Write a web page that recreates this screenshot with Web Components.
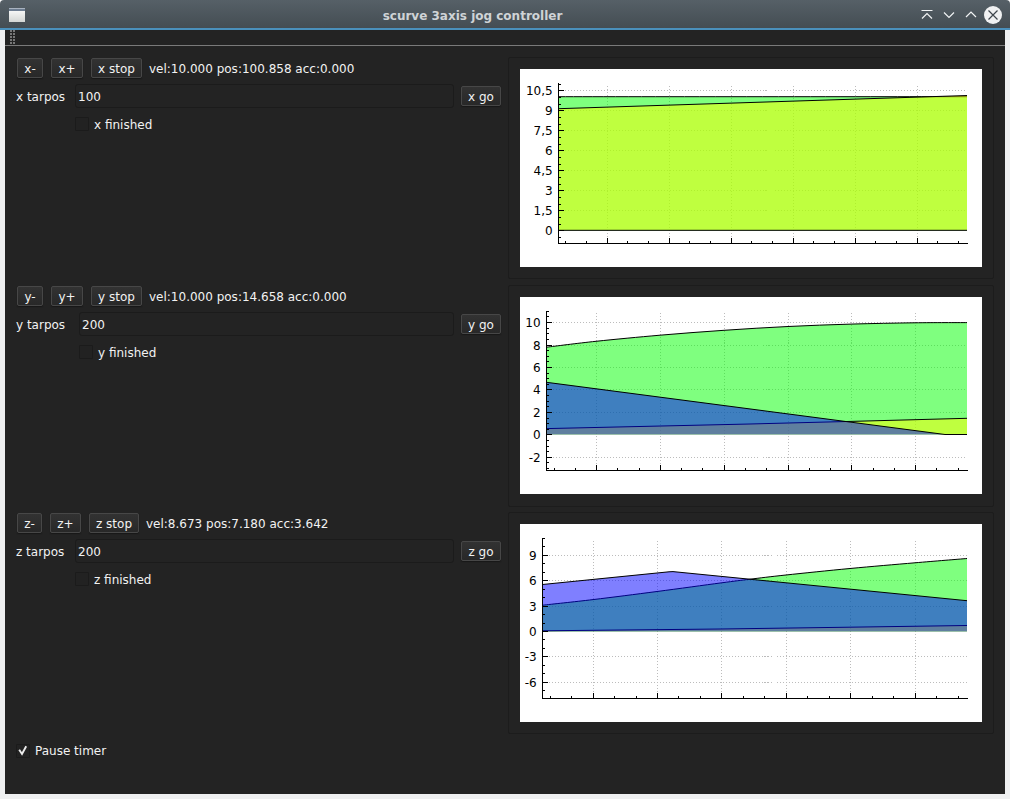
<!DOCTYPE html>
<html lang="en">
<head>
<meta charset="utf-8">
<title>scurve 3axis jog controller</title>
<style>
html,body{margin:0;height:100%;background:#fff;overflow:hidden}
body{font:12px/14px "DejaVu Sans",sans-serif;color:#f2f2f2}
</style>
</head>
<body>
<jog-window></jog-window>
<script>
const define = (name, html) => customElements.define(name, class extends HTMLElement {
  connectedCallback() {
    if (this.shadowRoot) return;
    const t = document.createElement('template');
    t.innerHTML = typeof html === 'function' ? html(this) : html;
    this.attachShadow({mode: 'open'}).append(t.content.cloneNode(true));
  }
});

define('title-bar', `<style>
:host{display:flex;box-sizing:border-box;height:30px;align-items:center;padding:0 8px 0 9px;border-bottom:2px solid #4a90bc;
 background:linear-gradient(#566067,#444d53);border-radius:4px 4px 0 0;color:#cfd3d6;font-weight:bold}
.app{width:16px;height:14px;flex:none;margin-top:2px}
.t{flex:1;text-align:center;padding:3px 0 0 0;white-space:nowrap}
.b{flex:none;margin-top:2px}
</style>
<svg class="app" viewBox="0 0 16 14"><defs><linearGradient id="g" x2="0" y2="1"><stop offset="0" stop-color="#fff"/><stop offset="1" stop-color="#d3d6d4"/></linearGradient></defs><path fill="url(#g)" d="M0 0h16v14H0z"/><path fill="#6d7d91" d="M0 0h16v3H0z"/><path fill="#a9b3c0" d="M0 0h16v1H0z"/></svg>
<div class="t"><slot></slot></div>
<svg class="b" width="82" height="20" viewBox="0 0 82 20" fill="none" stroke="#f1f3f4" stroke-width="1.2">
<path d="M1.5 5.5h11M2 13.5l5-5 5 5M24 7.5l5 5 5-5M46 12l5-5 5 5"/>
<circle cx="73" cy="10" r="9" fill="#f0f1f2" stroke="none"/><path stroke="#3e464c" d="M68.5 5.5l9 9M77.5 5.5l-9 9"/></svg>`);

define('tool-bar', `<style>
:host{display:block;height:15px;border-bottom:1px solid #7a7a7a;padding-left:5px}
svg{display:block}
</style><svg width="5" height="16"><defs><pattern id="p" width="3" height="3" patternUnits="userSpaceOnUse"><path fill="#777" d="M0 0h2v2H0z"/></pattern></defs><path fill="url(#p)" d="M0 0h5v16H0z"/></svg>`);

define('push-button', `<style>
:host{display:block;flex:none}
button{display:block;box-sizing:border-box;width:100%;height:20px;margin:0;padding:2px 0 0;border:1px solid #474747;border-radius:2px;
 background:linear-gradient(#323232,#282828);box-shadow:0 1px 1px #181818;font:inherit;color:inherit;line-height:16px;text-align:center;white-space:nowrap}
</style><button><slot></slot></button>`);

define('text-field', el => `<style>
:host{display:block;flex:1;min-width:0}
input{display:block;box-sizing:border-box;width:100%;height:24px;margin:0;padding:2px 2px 0;border:1px solid #1b1b1b;border-radius:3px;
 background:#232323;color:inherit;font:inherit;outline:0}
</style><input type="text" value="${el.getAttribute('value')}">`);

define('check-box', el => `<style>
:host{display:flex;align-items:center;gap:5px;height:14px}
.box{box-sizing:border-box;width:14px;height:14px;border:1px solid #1b1b1b;border-radius:1px;background:#222}
svg{display:block;overflow:visible}
.l{padding-top:var(--label-drop,2px)}
</style><span class="box">${el.hasAttribute('checked') ? '<svg width="12" height="12" fill="none" stroke="#ececec" stroke-width="1.9"><path d="M2.2 4.8l2.8 4.2L9.2 1.2"/></svg>' : ''}</span><span class="l"><slot></slot></span>`);

define('axis-panel', el => {
  const a = el.getAttribute('axis');
  const w = el.getAttribute('widths').split(',');
  return `<style>
:host{display:block;padding-left:11px}
.r{display:flex}
.jog{gap:8px;height:22px;padding-left:1px}
.jog push-button{margin-top:1px}
.jog span{padding-top:5px;margin-left:-1px;white-space:nowrap}
.go{margin-top:5px;height:24px}
.go label{width:${w[3]}px;padding-top:6px;white-space:nowrap}
.go push-button{width:40px;margin:2px 1px 0 7px}
check-box{margin:9px 0 0 ${w[3]}px}
</style>
<div class="r jog"><push-button style="width:${w[0]}px">${a}-</push-button><push-button style="width:${w[1]}px">${a}+</push-button><push-button style="width:${w[2]}px">${a} stop</push-button><span>${el.getAttribute('status')}</span></div>
<div class="r go"><label>${a} tarpos</label><text-field value="${el.getAttribute('target')}"></text-field><push-button>${a} go</push-button></div>
<check-box>${a} finished</check-box>`;
});

/* Plot data: pixel geometry of the axes and of the three filled series. */
const plots = {
  x: {h:198, ax:38, top:14, bot:174, zero:161.5, shift:.4, unit:13.333, sub:.5, lo:-.9, hi:11,
      labels:[[10.5,'10,5'],[9,'9'],[7.5,'7,5'],[6,'6'],[4.5,'4,5'],[3,'3'],[1.5,'1,5'],[0,'0']], x0:87.1, dx:62,
      vel:[[38.5,27.7],[447,27.7]], pos:[[38.5,39.7],[240,33.2],[447,26.5]], acc:[[38.5,161.3],[447,161.3]]},
  y: {h:197, ax:26, top:14, bot:173, zero:137.5, shift:.4, unit:11.23, sub:.5, lo:-3.1, hi:11,
      labels:[[10,'10'],[8,'8'],[6,'6'],[4,'4'],[2,'2'],[0,'0'],[-2,'-2']], x0:76.6, dx:63.8,
      vel:[[26.5,50.2],[76,44.3],[140,38.2],[204,33.3],[268,29.5],[331,27.1],[395,25.8],[447,25.6]],
      pos:[[26.5,131.6],[230,127],[331,124.4],[447,121.3]], acc:[[26.5,85.3],[425,137.5],[447,137.5]]},
  z: {h:198, ax:22, top:14, bot:174, zero:107.5, shift:0, unit:8.47, sub:1, lo:-7.8, hi:11,
      labels:[[9,'9'],[6,'6'],[3,'3'],[0,'0'],[-3,'-3'],[-6,'-6']], x0:73.1, dx:64.4,
      vel:[[22.5,81.2],[73,75.6],[137,67.5],[201,58.9],[230,55.2],[266,51],[330,44.5],[395,38.8],[447,34.5]],
      pos:[[22.5,106.8],[201,105],[330,103.2],[447,101.5]], acc:[[22.5,60.5],[149,47.8],[153,47.6],[157,48],[447,76.7]]}
};

/* Catmull-Rom spline through the points, as cubic segments. */
const spline = pts => pts.slice(1).map((b, i) => {
  const a = pts[i], p = pts[i - 1] || a, n = pts[i + 2] || b;
  return `C${a[0] + (b[0] - p[0]) / 6} ${a[1] + (b[1] - p[1]) / 6} ${b[0] - (n[0] - a[0]) / 6} ${b[1] - (n[1] - a[1]) / 6} ${b}`;
}).join('');

define('axis-plot', el => {
  const p = plots[el.getAttribute('axis')], R = 447, A = p.ax + .5, B = p.bot + .5;
  const y = v => Math.floor(p.zero + p.shift - v * p.unit) + .5;
  let grid = '', ticks = '', text = '';
  for (const [v, s] of p.labels) {
    if (v) grid += `M${A} ${y(v)}H${R}`;
    ticks += `M${A} ${y(v)}h5.5`;
    text += `<text x="${p.ax - 5.4}" y="${y(v) + 4.5}">${s}</text>`;
  }
  for (let k = Math.ceil(p.lo / p.sub); k * p.sub <= p.hi; k++) ticks += `M${A} ${y(k * p.sub)}h2.5`;
  for (let k = -2; ; k++) {
    const x = Math.floor(p.x0 + k * p.dx / 3) + .5;
    if (x > R) break;
    if (k % 3 === 0) { grid += `M${x} ${B - 1}V${p.top + 2}`; ticks += `M${x} ${B}v-5.5`; }
    else ticks += `M${x} ${B}v-2.5`;
  }
  const area = (pts, c, smooth) => {
    const line = smooth ? pts[0] + spline(pts) : pts.join('L');
    return `<path fill="${c}" fill-opacity=".5" d="M${p.ax} ${p.zero}L${line}V${p.zero}z"/><path fill="none" stroke="#000" d="M${line}"/>`;
  };
  return `<style>
:host{display:block;box-sizing:border-box;height:222px;border:1px solid #1c1c1c;border-radius:2px;padding:11px 0 0 11px}
svg{display:block;background:#fff}
text{font:12px "DejaVu Sans",sans-serif;text-anchor:end;fill:#000}
</style>
<svg width="462" height="${p.h}">
<path d="${grid}" fill="none" stroke="#bcbcbc" stroke-dasharray="1 2" shape-rendering="crispEdges"/>
${area(p.vel, '#0f0', true)}${area(p.pos, '#ff0')}${area(p.acc, '#00f')}
<path d="M${A} ${p.top}V${B}H${R + 1}${ticks}" fill="none" stroke="#000" shape-rendering="crispEdges"/>${text}</svg>`;
});

define('jog-window', `<style>
:host{display:flex;flex-direction:column;height:799px;width:1010px}
main{flex:1;box-sizing:border-box;margin:0;border:solid #eff0f1;border-width:0 5px 5px;background:#232323}
.rows{display:grid;grid-template-columns:497px 486px;grid-template-rows:228px 227px 222px;padding-top:11px;column-gap:6px}
.pause{margin:10px 0 0 11px;--label-drop:0}
</style>
<title-bar>scurve 3axis jog controller</title-bar>
<main><tool-bar></tool-bar>
<div class="rows">
<axis-panel axis="x" widths="26,32,51,59" target="100" status="vel:10.000 pos:100.858 acc:0.000"></axis-panel><axis-plot axis="x"></axis-plot>
<axis-panel axis="y" widths="26,32,51,63" target="200" status="vel:10.000 pos:14.658 acc:0.000"></axis-panel><axis-plot axis="y"></axis-plot>
<axis-panel axis="z" widths="25,31,50,59" target="200" status="vel:8.673 pos:7.180 acc:3.642"></axis-panel><axis-plot axis="z"></axis-plot>
</div>
<check-box class="pause" checked>Pause timer</check-box>
</main>`);
</script>
</body>
</html>
